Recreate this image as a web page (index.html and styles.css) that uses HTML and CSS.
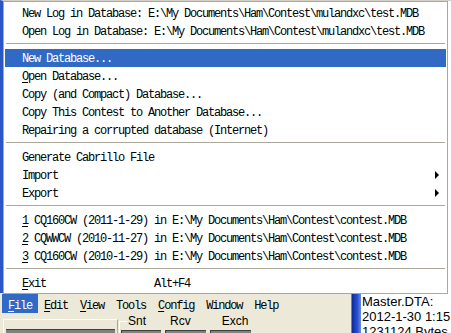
FILE: index.html
```html
<!DOCTYPE html>
<html lang="en">
<head>
  <meta charset="UTF-8" />
  <title>File menu</title>
  <link rel="stylesheet" href="styles.css">
</head>
<body>
  <div class="screen">
    <div class="workspace"></div>

    <div class="bottom">
      <div class="frame">
        <nav class="menubar">
          <span class="top active"><u>F</u>ile</span>
          <span class="top"><u>E</u>dit</span>
          <span class="top"><u>V</u>iew</span>
          <span class="top">Tools</span>
          <span class="top"><u>C</u>onfig</span>
          <span class="top">Window</span>
          <span class="top">Help</span>
        </nav>
        <div class="toolbar">
          <div class="panel"><div class="panel-bar"></div></div>
          <div class="group">
            <div class="labels">
              <span class="lbl snt">Snt</span>
              <span class="lbl rcv">Rcv</span>
              <span class="lbl exch">Exch</span>
            </div>
            <div class="fields">
              <div class="field f1"></div>
              <div class="field f2"></div>
              <div class="field f3"></div>
            </div>
          </div>
        </div>
      </div>
      <div class="info">
        <div class="stripe"></div>
        <div class="info-text">
          <div>Master.DTA:</div>
          <div>2012-1-30 1:15:</div>
          <div>1231124 Bytes</div>
        </div>
      </div>
    </div>

    <div class="popup">
      <div class="item">New Log in Database: E:\My Documents\Ham\Contest\mulandxc\test.MDB</div>
      <div class="item">Open Log in Database: E:\My Documents\Ham\Contest\mulandxc\test.MDB</div>
      <div class="sep"></div>
      <div class="item hover">New Database...</div>
      <div class="item"><u>O</u>pen Database...</div>
      <div class="item">Copy (and Compact) Database...</div>
      <div class="item">Copy This Contest to Another Database...</div>
      <div class="item">Repairing a corrupted database (Internet)</div>
      <div class="sep"></div>
      <div class="item">Generate Cabrillo File</div>
      <div class="item sub"><span class="label">Import</span><span class="arrow"></span></div>
      <div class="item sub"><span class="label">Export</span><span class="arrow"></span></div>
      <div class="sep"></div>
      <div class="item"><u>1</u> CQ160CW (2011-1-29) in E:\My Documents\Ham\Contest\contest.MDB</div>
      <div class="item"><u>2</u> CQWWCW (2010-11-27) in E:\My Documents\Ham\Contest\contest.MDB</div>
      <div class="item"><u>3</u> CQ160CW (2010-1-29) in E:\My Documents\Ham\Contest\contest.MDB</div>
      <div class="sep"></div>
      <div class="item"><span class="key"><u>E</u>xit</span>Alt+F4</div>
    </div>
  </div>
</body>
</html>
```

FILE: styles.css
```css
body {
  margin: 0;
  background: #fff;
}
.screen {
  position: relative;
  width: 451px;
  height: 333px;
  overflow: hidden;
  display: flex;
  flex-direction: column;
  background: #fff;
}
.workspace {
  height: 293px;
  flex: 0 0 293px;
  box-sizing: border-box;
  border-top: 1px solid #d4d0c8;
  border-left: 3px solid #2a56c6;
  background: #fff;
}
.bottom {
  display: flex;
  flex: 1;
}
.frame {
  width: 352px;
  background: #ece9d8;
}
.menubar {
  display: flex;
  height: 19px;
  margin-top: 1px;
  padding-left: 2px;
  font-family: "Liberation Mono", monospace;
  font-size: 12px;
  letter-spacing: -1.2px;
  color: #000;
}
.top {
  box-sizing: border-box;
  height: 19px;
  padding: 3px 6px 0 6px;
  line-height: 18px;
}
.top.active {
  background: #316ac5;
  color: #fff;
}
.toolbar {
  display: flex;
  height: 20px;
}
.panel {
  box-sizing: border-box;
  width: 115px;
  margin: 6px 0 0 3px;
  border-top: 1px solid #fff;
  border-left: 1px solid #fff;
  border-right: 1px solid #aca899;
  display: flex;
  align-items: flex-end;
  padding: 0 2px;
}
.panel-bar {
  flex: 1;
  height: 3px;
  background: #808080;
  border-top: 1px solid #404040;
}
.group {
  position: relative;
  width: 232px;
  margin-left: 1px;
}
.group::before {
  content: "";
  position: absolute;
  left: 0;
  top: 8px;
  width: 7px;
  height: 20px;
  border-top: 1px solid #fff;
  border-left: 1px solid #fff;
}
.labels {
  display: flex;
  height: 14px;
  padding-top: 1px;
  font-family: "Liberation Sans", Arial, sans-serif;
  font-size: 12px;
  line-height: 14px;
  color: #000;
}
.lbl.snt { margin-left: 9px; }
.lbl.rcv { margin-left: 24px; }
.lbl.exch { margin-left: 31px; }
.fields {
  display: flex;
  gap: 4px;
  margin-top: 2px;
  padding-left: 2px;
}
.field {
  height: 4px;
  background: #808080;
  border-top: 1px solid #404040;
  border-left: 1px solid #404040;
}
.f1 { width: 39px; }
.f2 { width: 40px; }
.f3 { width: 40px; }
.info {
  flex: 1;
  display: flex;
  border-left: 1px solid #808080;
}
.stripe {
  width: 9px;
  background: linear-gradient(to right, #0a2a9a, #2a4fd0 60%, #6a8ee0);
}
.info-text {
  flex: 1;
  padding: 1px 0 0 1px;
  background: #fff;
  font-family: "Liberation Sans", Arial, sans-serif;
  font-size: 13px;
  line-height: 15px;
  color: #000;
  white-space: nowrap;
  overflow: hidden;
}
.popup {
  position: absolute;
  left: 3px;
  top: 1px;
  width: 445px;
  box-sizing: border-box;
  border: 1px solid #aca899;
  padding: 2px 1px 1px 1px;
  background: #fff;
  font-family: "Liberation Mono", monospace;
  font-size: 12px;
  letter-spacing: -1.2px;
  color: #000;
}
.item {
  height: 18px;
  line-height: 20px;
  padding-left: 17px;
  white-space: nowrap;
  overflow: hidden;
}
.item.sub {
  display: flex;
}
.item.hover {
  background: #316ac5;
  color: #fff;
}
.item .label {
  flex: 1;
}
.item .key {
  display: inline-block;
  width: 132px;
}
.arrow {
  width: 0;
  height: 0;
  margin: 5px 7px 0 0;
  border-left: 4px solid #000;
  border-top: 4px solid transparent;
  border-bottom: 4px solid transparent;
}
.sep {
  height: 9px;
  box-sizing: border-box;
  padding-top: 3px;
}
.sep::after {
  content: "";
  display: block;
  margin: 0 1px;
  height: 1px;
  background: #aca899;
}
u {
  text-decoration: underline;
  text-underline-offset: 2px;
}
```
